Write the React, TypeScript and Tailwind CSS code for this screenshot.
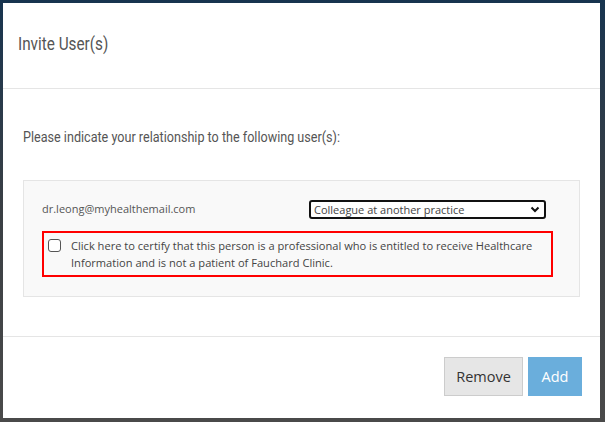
export default function App() {
  const narrow = { fontFamily: 'Roboto, "Liberation Sans", sans-serif' }
  const ui = { fontFamily: '"Open Sans", "Noto Sans", sans-serif' }

  return (
    <div className="h-[422px] w-[605px] overflow-hidden bg-gradient-to-b from-[#17344f] via-[#3a3f44] to-[#4a4a4a] pb-[4px] pl-[3px] pr-[5px] pt-[3px]">
      <div className="flex h-full flex-col bg-white">
        <div className="flex h-[86px] items-center border-b border-[#e5e5e5] px-[15px] pb-[4px]">
          <h1 className="origin-left scale-x-[0.85] whitespace-nowrap text-[18px] text-[#555]" style={narrow}>
            Invite User(s)
          </h1>
        </div>

        <div className="flex flex-1 flex-col border-b border-[#e5e5e5] px-[20px] pt-[37px]">
          <p className="origin-left scale-x-[0.84] whitespace-nowrap text-[15px] text-[#555]" style={narrow}>
            Please indicate your relationship to the following user(s):
          </p>

          <div className="mt-[31px] h-[117px] border border-[#e5e5e5] bg-[#f9f9f9] px-[18px] pt-[19px]" style={ui}>
            <div className="flex items-center">
              <span className="w-[267px] text-[11px] text-[#555]">dr.leong@myhealthemail.com</span>
              <div className="flex h-[19px] w-[237px] items-center justify-between rounded-[3px] border-2 border-[#111] bg-white pl-[3px] pr-[4px]">
                <span className="text-[11px] leading-none text-[#444]">Colleague at another practice</span>
                <svg width="10" height="7" viewBox="0 0 10 7" fill="none">
                  <path d="M1.5 1.5 L5 5 L8.5 1.5" stroke="#111" strokeWidth="2" />
                </svg>
              </div>
            </div>

            <div className="mt-[12px] flex w-[511px] items-start gap-[10px] border-2 border-[#f00] pb-[4px] pl-[4px] pr-[6px] pt-[4px]">
              <span className="mt-[2px] h-[13px] w-[13px] shrink-0 rounded-[3px] border border-[#555] bg-white" />
              <p className="whitespace-nowrap text-[11.1px] leading-[17px] text-[#444]">
                Click here to certify that this person is a professional who is entitled to receive Healthcare
                <br />
                Information and is not a patient of Fauchard Clinic.
              </p>
            </div>
          </div>
        </div>

        <div className="flex h-[81px] items-start justify-end gap-[5px] pr-[18px] pt-[20px]" style={ui}>
          <button className="h-[39px] w-[79px] border border-[#ccc] bg-[#e6e6e6] text-[14.5px] text-[#333]">Remove</button>
          <button className="h-[39px] w-[54px] bg-[#6aaedc] text-[14.5px] text-white">Add</button>
        </div>
      </div>
    </div>
  )
}
